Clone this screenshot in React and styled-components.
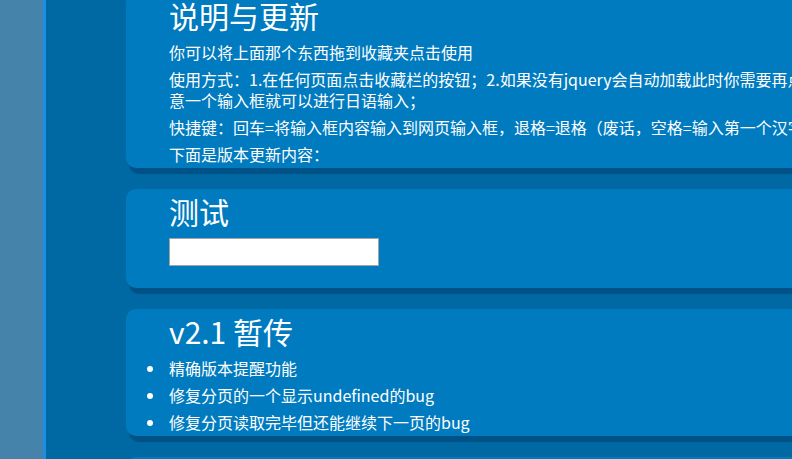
import React from "react";
import styled, { createGlobalStyle } from "styled-components";

const Global = createGlobalStyle`
  html, body {
    margin: 0;
    padding: 0;
    overflow: hidden;
    background: #0068a2;
  }
  body {
    font-family: "Noto Sans CJK SC", "Noto Sans", sans-serif;
    color: #ffffff;
  }
  * { box-sizing: border-box; }
`;

const Page = styled.div`
  display: flex;
  min-height: 100vh;
  width: 100vw;
`;

const SideStrip = styled.aside`
  flex: 0 0 46px;
  background: #4583ab;
  border-right: 3px solid #1a8fe4;
`;

const Main = styled.main`
  flex: 1;
  background: #0068a2;
  padding-left: 80px;
  display: flex;
  flex-direction: column;
  gap: 21px;
  margin-top: -7px;
  min-width: 0;
`;

const Card = styled.section`
  width: 1100px;
  flex: none;
  background: #007bbf;
  border-radius: 10px;
  padding: 4px 0 3px 43px;
  box-shadow: 3px 6px 1px rgba(0, 40, 80, 0.35);
`;

const Title = styled.h2`
  margin: 0 0 9px;
  font-size: 30px;
  line-height: 36px;
  font-weight: 400;
  color: #ffffff;
`;

const Para = styled.p`
  margin: 0 0 6px;
  font-size: 16px;
  line-height: 21px;
  color: #ffffff;
  &:last-child { margin-bottom: 0; }
`;

const TestInput = styled.input`
  display: block;
  width: 210px;
  height: 28px;
  margin: 0 0 19px;
  border: 1px solid #a3a3a3;
  background: #ffffff;
  outline: none;
`;

const List = styled.ul`
  list-style: none;
  margin: 0 0 0 -22px;
  padding: 0;
  display: flex;
  flex-direction: column;
  gap: 6px;
`;

const Item = styled.li`
  display: flex;
  align-items: center;
  font-size: 16px;
  line-height: 21px;
  &::before {
    content: "";
    flex: none;
    width: 6px;
    height: 6px;
    border-radius: 50%;
    background: #ffffff;
    margin-right: 16px;
  }
`;

export default function App() {
  return (
    <>
      <Global />
      <Page>
        <SideStrip />
        <Main>
          <Card>
            <Title>说明与更新</Title>
            <Para>你可以将上面那个东西拖到收藏夹点击使用</Para>
            <Para>
              使用方式：1.在任何页面点击收藏栏的按钮；2.如果没有jquery会自动加载此时你需要再点击一次按钮；3.点击任
              <br />
              意一个输入框就可以进行日语输入；
            </Para>
            <Para>
              快捷键：回车=将输入框内容输入到网页输入框，退格=退格（废话，空格=输入第一个汉字
            </Para>
            <Para>下面是版本更新内容：</Para>
          </Card>
          <Card>
            <Title>测试</Title>
            <TestInput type="text" />
          </Card>
          <Card>
            <Title>v2.1 暂传</Title>
            <List>
              <Item>精确版本提醒功能</Item>
              <Item>修复分页的一个显示undefined的bug</Item>
              <Item>修复分页读取完毕但还能继续下一页的bug</Item>
            </List>
          </Card>
          <Card>
            <Title>v2.0</Title>
            <List>
              <Item>新的界面</Item>
            </List>
          </Card>
        </Main>
      </Page>
    </>
  );
}
